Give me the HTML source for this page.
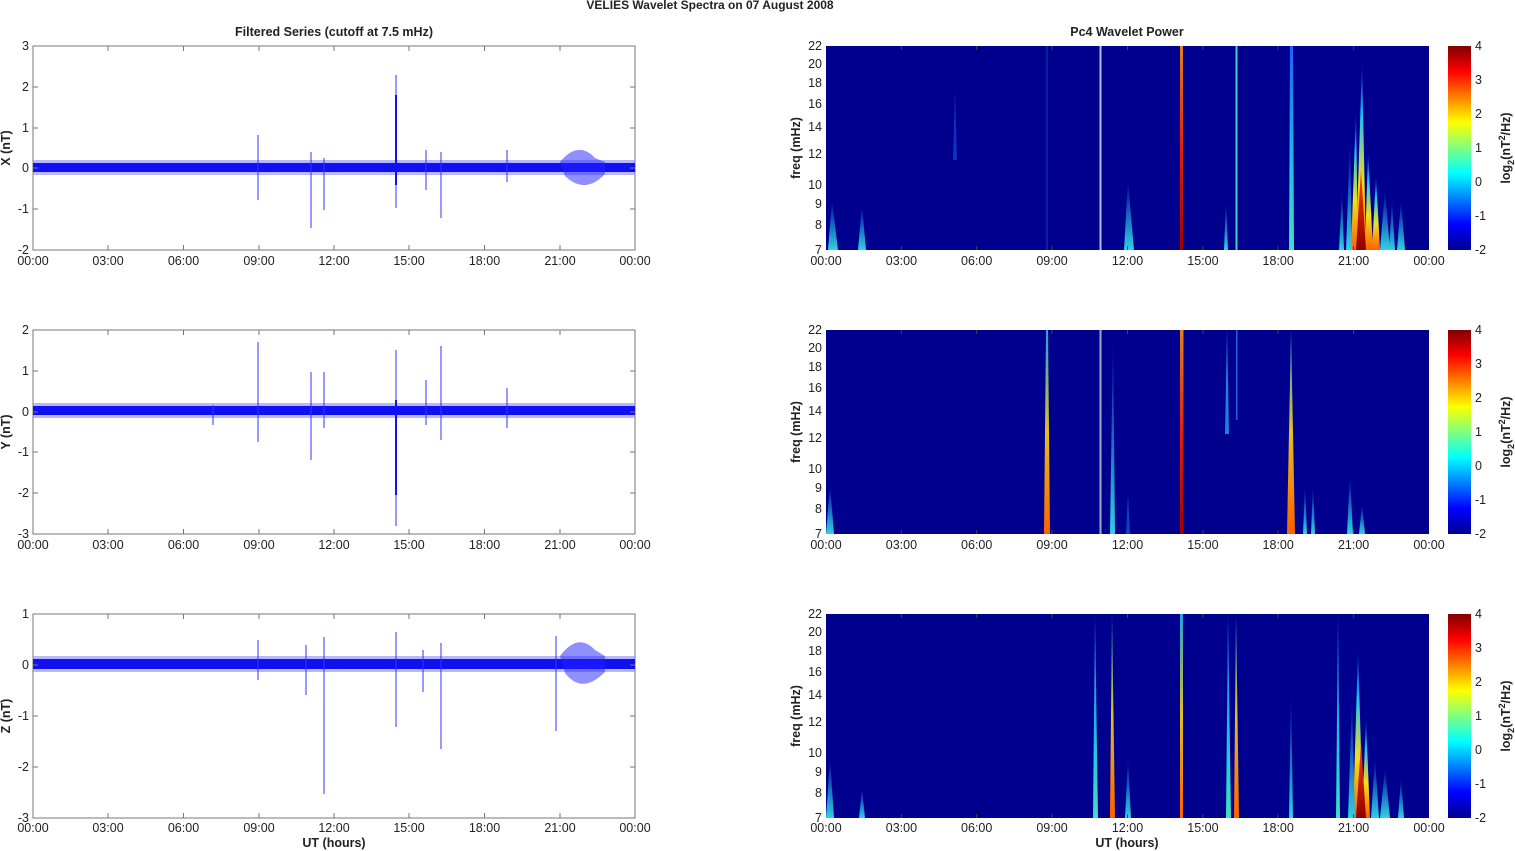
<!DOCTYPE html>
<html><head><meta charset="utf-8"><style>
html,body{margin:0;padding:0;background:#fff}
svg{display:block}
text{font-family:"Liberation Sans",Arial,sans-serif;font-size:12.5px;fill:#222}
.b{font-weight:bold}
.yl{text-anchor:end}
.xl{text-anchor:middle}
</style></head><body>
<svg width="1515" height="851" viewBox="0 0 1515 851" xmlns="http://www.w3.org/2000/svg">
<defs>
<linearGradient id="jet" x1="0" y1="1" x2="0" y2="0">
<stop offset="0" stop-color="#00008f"/><stop offset="0.125" stop-color="#0000ff"/><stop offset="0.375" stop-color="#00ffff"/><stop offset="0.5" stop-color="#80ff80"/><stop offset="0.625" stop-color="#ffff00"/><stop offset="0.875" stop-color="#ff0000"/><stop offset="1" stop-color="#800000"/>
</linearGradient>
<linearGradient id="red" x1="0" y1="0" x2="0" y2="1"><stop offset="0" stop-color="#e08020"/><stop offset="0.5" stop-color="#e02010"/><stop offset="1" stop-color="#a00000"/></linearGradient>
<linearGradient id="yel" x1="0" y1="0" x2="0" y2="1"><stop offset="0" stop-color="#20a0e0"/><stop offset="0.5" stop-color="#e0c020"/><stop offset="1" stop-color="#ff6000"/></linearGradient>
<linearGradient id="cy" x1="0" y1="0" x2="0" y2="1"><stop offset="0" stop-color="#2060ff"/><stop offset="0.6" stop-color="#20c0e0"/><stop offset="1" stop-color="#40e0c0"/></linearGradient>
<linearGradient id="cyb" x1="0" y1="0" x2="0" y2="1"><stop offset="0" stop-color="#0000a0"/><stop offset="1" stop-color="#30d0e0"/></linearGradient>
<linearGradient id="hot" x1="0" y1="0" x2="0" y2="1"><stop offset="0" stop-color="#0000c0"/><stop offset="0.3" stop-color="#20c0f0"/><stop offset="0.65" stop-color="#f0e020"/><stop offset="1" stop-color="#ff6000"/></linearGradient>
<linearGradient id="dr" x1="0" y1="0" x2="0" y2="1"><stop offset="0" stop-color="#ff4000"/><stop offset="1" stop-color="#900000"/></linearGradient>
</defs>

<text x="710" y="9" class="b xl" style="font-size:12px">VELIES Wavelet Spectra on 07 August    2008</text>
<text x="334" y="36" class="b xl">Filtered Series (cutoff at 7.5 mHz)</text>
<text x="1127" y="36" class="b xl">Pc4 Wavelet Power</text>

<!-- LEFT PANELS -->
<g stroke="#777" fill="none">
<rect x="33" y="46" width="602" height="204"/>
<rect x="33" y="330" width="602" height="204"/>
<rect x="33" y="614" width="602" height="204"/>
</g>
<g>
<rect x="33" y="160" width="602" height="15" fill="#8888ff" opacity="0.6"/>
<rect x="33" y="163" width="602" height="9" fill="#1010f0"/>
<path d="M560 162 Q578 140 595 158 L605 162 L605 174 Q585 195 565 176 Z" fill="#2020ff" opacity="0.5"/>
<g stroke="#3030ff" stroke-width="1">
<line x1="258" y1="135" x2="258" y2="200"/><line x1="311" y1="152" x2="311" y2="228"/><line x1="324" y1="158" x2="324" y2="210"/><line x1="396" y1="75" x2="396" y2="208"/><line x1="426" y1="150" x2="426" y2="190"/><line x1="441" y1="152" x2="441" y2="218"/><line x1="507" y1="150" x2="507" y2="182"/>
</g>
<rect x="395" y="95" width="2" height="90" fill="#1010ff"/>
</g>
<g class="yl"><text x="29" y="50">3</text><text x="29" y="91">2</text><text x="29" y="132">1</text><text x="29" y="172">0</text><text x="29" y="213">-1</text><text x="29" y="254">-2</text></g>
<text transform="translate(10,148) rotate(-90)" class="b xl">X (nT)</text>

<rect x="33" y="403" width="602" height="15" fill="#8888ff" opacity="0.6"/>
<rect x="33" y="406" width="602" height="9" fill="#1010f0"/>
<g stroke="#3030ff" stroke-width="1">
<line x1="258" y1="342" x2="258" y2="442"/><line x1="311" y1="372" x2="311" y2="460"/><line x1="324" y1="372" x2="324" y2="428"/><line x1="396" y1="350" x2="396" y2="526"/><line x1="426" y1="380" x2="426" y2="425"/><line x1="441" y1="346" x2="441" y2="440"/><line x1="507" y1="388" x2="507" y2="428"/><line x1="213" y1="405" x2="213" y2="425"/>
</g>
<rect x="395" y="400" width="2" height="95" fill="#1010ff"/>
<g class="yl"><text x="29" y="334">2</text><text x="29" y="375">1</text><text x="29" y="416">0</text><text x="29" y="456">-1</text><text x="29" y="497">-2</text><text x="29" y="538">-3</text></g>
<text transform="translate(10,432) rotate(-90)" class="b xl">Y (nT)</text>

<rect x="33" y="656" width="602" height="16" fill="#8888ff" opacity="0.6"/>
<rect x="33" y="659" width="602" height="10" fill="#1010f0"/>
<path d="M560 656 Q578 632 595 650 L605 656 L605 672 Q582 695 565 673 Z" fill="#2020ff" opacity="0.5"/>
<g stroke="#3030ff" stroke-width="1">
<line x1="258" y1="640" x2="258" y2="680"/><line x1="306" y1="645" x2="306" y2="695"/><line x1="324" y1="637" x2="324" y2="794"/><line x1="396" y1="632" x2="396" y2="727"/><line x1="423" y1="650" x2="423" y2="692"/><line x1="441" y1="643" x2="441" y2="749"/><line x1="556" y1="636" x2="556" y2="731"/>
</g>
<g class="yl"><text x="29" y="618">1</text><text x="29" y="669">0</text><text x="29" y="720">-1</text><text x="29" y="771">-2</text><text x="29" y="822">-3</text></g>
<text transform="translate(10,716) rotate(-90)" class="b xl">Z (nT)</text>

<!-- left ticks -->
<g stroke="#777">
<path d="M108 46v5M183.5 46v5M259 46v5M334 46v5M409 46v5M484.5 46v5M560 46v5M108 250v-5M183.5 250v-5M259 250v-5M334 250v-5M409 250v-5M484.5 250v-5M560 250v-5M33 87h5M33 128h5M33 168h5M33 209h5M630 87h5M630 128h5M630 168h5M630 209h5"/>
<path transform="translate(0,284)" d="M108 46v5M183.5 46v5M259 46v5M334 46v5M409 46v5M484.5 46v5M560 46v5M108 250v-5M183.5 250v-5M259 250v-5M334 250v-5M409 250v-5M484.5 250v-5M560 250v-5M33 87h5M33 128h5M33 168h5M33 209h5M630 87h5M630 128h5M630 168h5M630 209h5"/>
<path transform="translate(0,568)" d="M108 46v5M183.5 46v5M259 46v5M334 46v5M409 46v5M484.5 46v5M560 46v5M108 250v-5M183.5 250v-5M259 250v-5M334 250v-5M409 250v-5M484.5 250v-5M560 250v-5M33 97h5M33 148h5M33 199h5M630 97h5M630 148h5M630 199h5"/>
</g>

<!-- x labels -->
<g class="xl">
<g><text x="33" y="265">00:00</text><text x="108" y="265">03:00</text><text x="183.5" y="265">06:00</text><text x="259" y="265">09:00</text><text x="334" y="265">12:00</text><text x="409" y="265">15:00</text><text x="484.5" y="265">18:00</text><text x="560" y="265">21:00</text><text x="635" y="265">00:00</text></g>
<g transform="translate(0,284)"><text x="33" y="265">00:00</text><text x="108" y="265">03:00</text><text x="183.5" y="265">06:00</text><text x="259" y="265">09:00</text><text x="334" y="265">12:00</text><text x="409" y="265">15:00</text><text x="484.5" y="265">18:00</text><text x="560" y="265">21:00</text><text x="635" y="265">00:00</text></g>
<g transform="translate(0,567)"><text x="33" y="265">00:00</text><text x="108" y="265">03:00</text><text x="183.5" y="265">06:00</text><text x="259" y="265">09:00</text><text x="334" y="265">12:00</text><text x="409" y="265">15:00</text><text x="484.5" y="265">18:00</text><text x="560" y="265">21:00</text><text x="635" y="265">00:00</text></g>
<g transform="translate(793,567)"><text x="33" y="265">00:00</text><text x="108.4" y="265">03:00</text><text x="183.7" y="265">06:00</text><text x="259" y="265">09:00</text><text x="334.5" y="265">12:00</text><text x="409.9" y="265">15:00</text><text x="485.2" y="265">18:00</text><text x="560.6" y="265">21:00</text><text x="636" y="265">00:00</text></g>
<g transform="translate(793,284)"><text x="33" y="265">00:00</text><text x="108.4" y="265">03:00</text><text x="183.7" y="265">06:00</text><text x="259" y="265">09:00</text><text x="334.5" y="265">12:00</text><text x="409.9" y="265">15:00</text><text x="485.2" y="265">18:00</text><text x="560.6" y="265">21:00</text><text x="636" y="265">00:00</text></g>
<g transform="translate(793,0)"><text x="33" y="265">00:00</text><text x="108.4" y="265">03:00</text><text x="183.7" y="265">06:00</text><text x="259" y="265">09:00</text><text x="334.5" y="265">12:00</text><text x="409.9" y="265">15:00</text><text x="485.2" y="265">18:00</text><text x="560.6" y="265">21:00</text><text x="636" y="265">00:00</text></g>
</g>
<text x="334" y="847" class="b xl">UT (hours)</text>
<text x="1127" y="847" class="b xl">UT (hours)</text>

<!-- RIGHT PANELS -->
<g>
<rect x="826" y="46" width="603" height="204" fill="#00008f"/>
<rect x="1046.5" y="46" width="1" height="204" fill="#1040c0"/>
<rect x="1099.5" y="46" width="2" height="204" fill="#a0c8e0"/>
<rect x="1180" y="46" width="3" height="204" fill="url(#red)"/>
<rect x="1235.5" y="46" width="2" height="204" fill="#40d0c0"/>
<polygon points="1290,46 1293,46 1294,250 1289,250" fill="url(#cy)"/>
<polygon points="1128,180 1124,250 1134,250" fill="url(#cyb)"/>
<polygon points="1226,200 1224,250 1228,250" fill="url(#cyb)"/>
<polygon points="832,200 828,250 838,250" fill="url(#cyb)"/>
<polygon points="862,205 858,250 866,250" fill="url(#cyb)"/>
<polygon points="955,90 953,160 957,160" fill="#1030c0"/>
<polygon points="1362,60 1356,250 1366,250" fill="url(#hot)"/>
<polygon points="1356,110 1351,250 1358,250" fill="url(#hot)"/>
<polygon points="1350,140 1346,250 1352,250" fill="url(#cyb)"/>
<polygon points="1342,190 1339,250 1344,250" fill="url(#cyb)"/>
<polygon points="1368,150 1365,250 1373,250" fill="url(#hot)"/>
<polygon points="1361,170 1356,250 1366,250" fill="url(#dr)"/>
<polygon points="1376,175 1372,250 1380,250" fill="url(#hot)"/>
<polygon points="1385,190 1380,250 1390,250" fill="url(#cyb)"/>
<polygon points="1392,200 1389,250 1395,250" fill="url(#cyb)"/>
<polygon points="1401,200 1397,250 1405,250" fill="url(#cyb)"/>
</g>
<g transform="translate(0,284)">
<rect x="826" y="46" width="603" height="204" fill="#00008f"/>
<polygon points="1046,46 1048,46 1050,250 1044,250" fill="url(#yel)"/>
<rect x="1099.5" y="46" width="2" height="204" fill="#90b0c0"/>
<polygon points="1113,50 1110,250 1115,250" fill="url(#cyb)"/>
<rect x="1180" y="46" width="3.5" height="204" fill="url(#red)"/>
<polygon points="1227,46 1225,150 1229,150" fill="#2080e0"/>
<rect x="1236" y="46" width="1.5" height="90" fill="#2060e0"/>
<polygon points="1291,46 1287,250 1295,250" fill="url(#yel)"/>
<polygon points="1305,200 1303,250 1307,250" fill="url(#cyb)"/>
<polygon points="1313,200 1311,250 1315,250" fill="url(#cyb)"/>
<polygon points="1350,190 1347,250 1353,250" fill="url(#cyb)"/>
<polygon points="1362,220 1359,250 1365,250" fill="url(#cyb)"/>
<polygon points="830,200 826,250 834,250" fill="url(#cyb)"/>
<polygon points="1128,210 1126,250 1130,250" fill="#1040c0"/>
</g>
<g transform="translate(0,568)">
<rect x="826" y="46" width="603" height="204" fill="#00008f"/>
<polygon points="1095,46 1093,250 1098,250" fill="url(#cy)"/>
<polygon points="1112,46 1110,250 1115,250" fill="url(#yel)"/>
<polygon points="1128,190 1125,250 1131,250" fill="url(#cyb)"/>
<rect x="1180" y="46" width="3" height="204" fill="url(#yel)"/>
<polygon points="1228,46 1226,250 1231,250" fill="url(#cy)"/>
<polygon points="1236,46 1234,250 1239,250" fill="url(#yel)"/>
<polygon points="1291,120 1289,250 1293,250" fill="url(#cyb)"/>
<polygon points="1338,46 1336,250 1340,250" fill="url(#cy)"/>
<polygon points="1358,80 1353,250 1363,250" fill="url(#hot)"/>
<polygon points="1352,130 1348,250 1355,250" fill="url(#cyb)"/>
<polygon points="1366,150 1362,250 1370,250" fill="url(#hot)"/>
<polygon points="1361,175 1356,250 1366,250" fill="url(#dr)"/>
<polygon points="1375,190 1371,250 1379,250" fill="url(#cyb)"/>
<polygon points="1385,200 1380,250 1390,250" fill="url(#cyb)"/>
<polygon points="1401,210 1398,250 1404,250" fill="url(#cyb)"/>
<polygon points="830,190 826,250 834,250" fill="url(#cyb)"/>
<polygon points="862,220 859,250 865,250" fill="url(#cyb)"/>
</g>
<!-- right ticks -->
<g stroke="#444" stroke-width="1">
<path d="M901.4 46v4M976.7 46v4M1052 46v4M1127.5 46v4M1203 46v4M1278 46v4M1353.6 46v4M901.4 250v-4M976.7 250v-4M1052 250v-4M1127.5 250v-4M1203 250v-4M1278 250v-4M1353.6 250v-4"/>
<path transform="translate(0,284)" d="M901.4 46v4M976.7 46v4M1052 46v4M1127.5 46v4M1203 46v4M1278 46v4M1353.6 46v4M901.4 250v-4M976.7 250v-4M1052 250v-4M1127.5 250v-4M1203 250v-4M1278 250v-4M1353.6 250v-4"/>
<path transform="translate(0,568)" d="M901.4 46v4M976.7 46v4M1052 46v4M1127.5 46v4M1203 46v4M1278 46v4M1353.6 46v4M901.4 250v-4M976.7 250v-4M1052 250v-4M1127.5 250v-4M1203 250v-4M1278 250v-4M1353.6 250v-4"/>
</g>

<g class="yl">
<g><text x="822" y="50">22</text><text x="822" y="68">20</text><text x="822" y="87">18</text><text x="822" y="108">16</text><text x="822" y="131">14</text><text x="822" y="158">12</text><text x="822" y="189">10</text><text x="822" y="208">9</text><text x="822" y="229">8</text><text x="822" y="254">7</text></g>
<g transform="translate(0,284)"><text x="822" y="50">22</text><text x="822" y="68">20</text><text x="822" y="87">18</text><text x="822" y="108">16</text><text x="822" y="131">14</text><text x="822" y="158">12</text><text x="822" y="189">10</text><text x="822" y="208">9</text><text x="822" y="229">8</text><text x="822" y="254">7</text></g>
<g transform="translate(0,568)"><text x="822" y="50">22</text><text x="822" y="68">20</text><text x="822" y="87">18</text><text x="822" y="108">16</text><text x="822" y="131">14</text><text x="822" y="158">12</text><text x="822" y="189">10</text><text x="822" y="208">9</text><text x="822" y="229">8</text><text x="822" y="254">7</text></g>
</g>
<text transform="translate(800,148) rotate(-90)" class="b xl">freq (mHz)</text>
<text transform="translate(800,432) rotate(-90)" class="b xl">freq (mHz)</text>
<text transform="translate(800,716) rotate(-90)" class="b xl">freq (mHz)</text>

<g>
<rect x="1448" y="46" width="23" height="204" fill="url(#jet)"/>
<rect x="1448" y="330" width="23" height="204" fill="url(#jet)"/>
<rect x="1448" y="614" width="23" height="204" fill="url(#jet)"/>
<g><text x="1475" y="50">4</text><text x="1475" y="84">3</text><text x="1475" y="118">2</text><text x="1475" y="152">1</text><text x="1475" y="186">0</text><text x="1475" y="220">-1</text><text x="1475" y="254">-2</text></g>
<g transform="translate(0,284)"><text x="1475" y="50">4</text><text x="1475" y="84">3</text><text x="1475" y="118">2</text><text x="1475" y="152">1</text><text x="1475" y="186">0</text><text x="1475" y="220">-1</text><text x="1475" y="254">-2</text></g>
<g transform="translate(0,568)"><text x="1475" y="50">4</text><text x="1475" y="84">3</text><text x="1475" y="118">2</text><text x="1475" y="152">1</text><text x="1475" y="186">0</text><text x="1475" y="220">-1</text><text x="1475" y="254">-2</text></g>
<text transform="translate(1510,148) rotate(-90)" class="b xl">log<tspan dy="4" style="font-size:9px">2</tspan><tspan dy="-4">(nT</tspan><tspan dy="-5" style="font-size:9px">2</tspan><tspan dy="5">/Hz)</tspan></text>
<text transform="translate(1510,432) rotate(-90)" class="b xl">log<tspan dy="4" style="font-size:9px">2</tspan><tspan dy="-4">(nT</tspan><tspan dy="-5" style="font-size:9px">2</tspan><tspan dy="5">/Hz)</tspan></text>
<text transform="translate(1510,716) rotate(-90)" class="b xl">log<tspan dy="4" style="font-size:9px">2</tspan><tspan dy="-4">(nT</tspan><tspan dy="-5" style="font-size:9px">2</tspan><tspan dy="5">/Hz)</tspan></text>
</g>
</svg>
</body></html>
